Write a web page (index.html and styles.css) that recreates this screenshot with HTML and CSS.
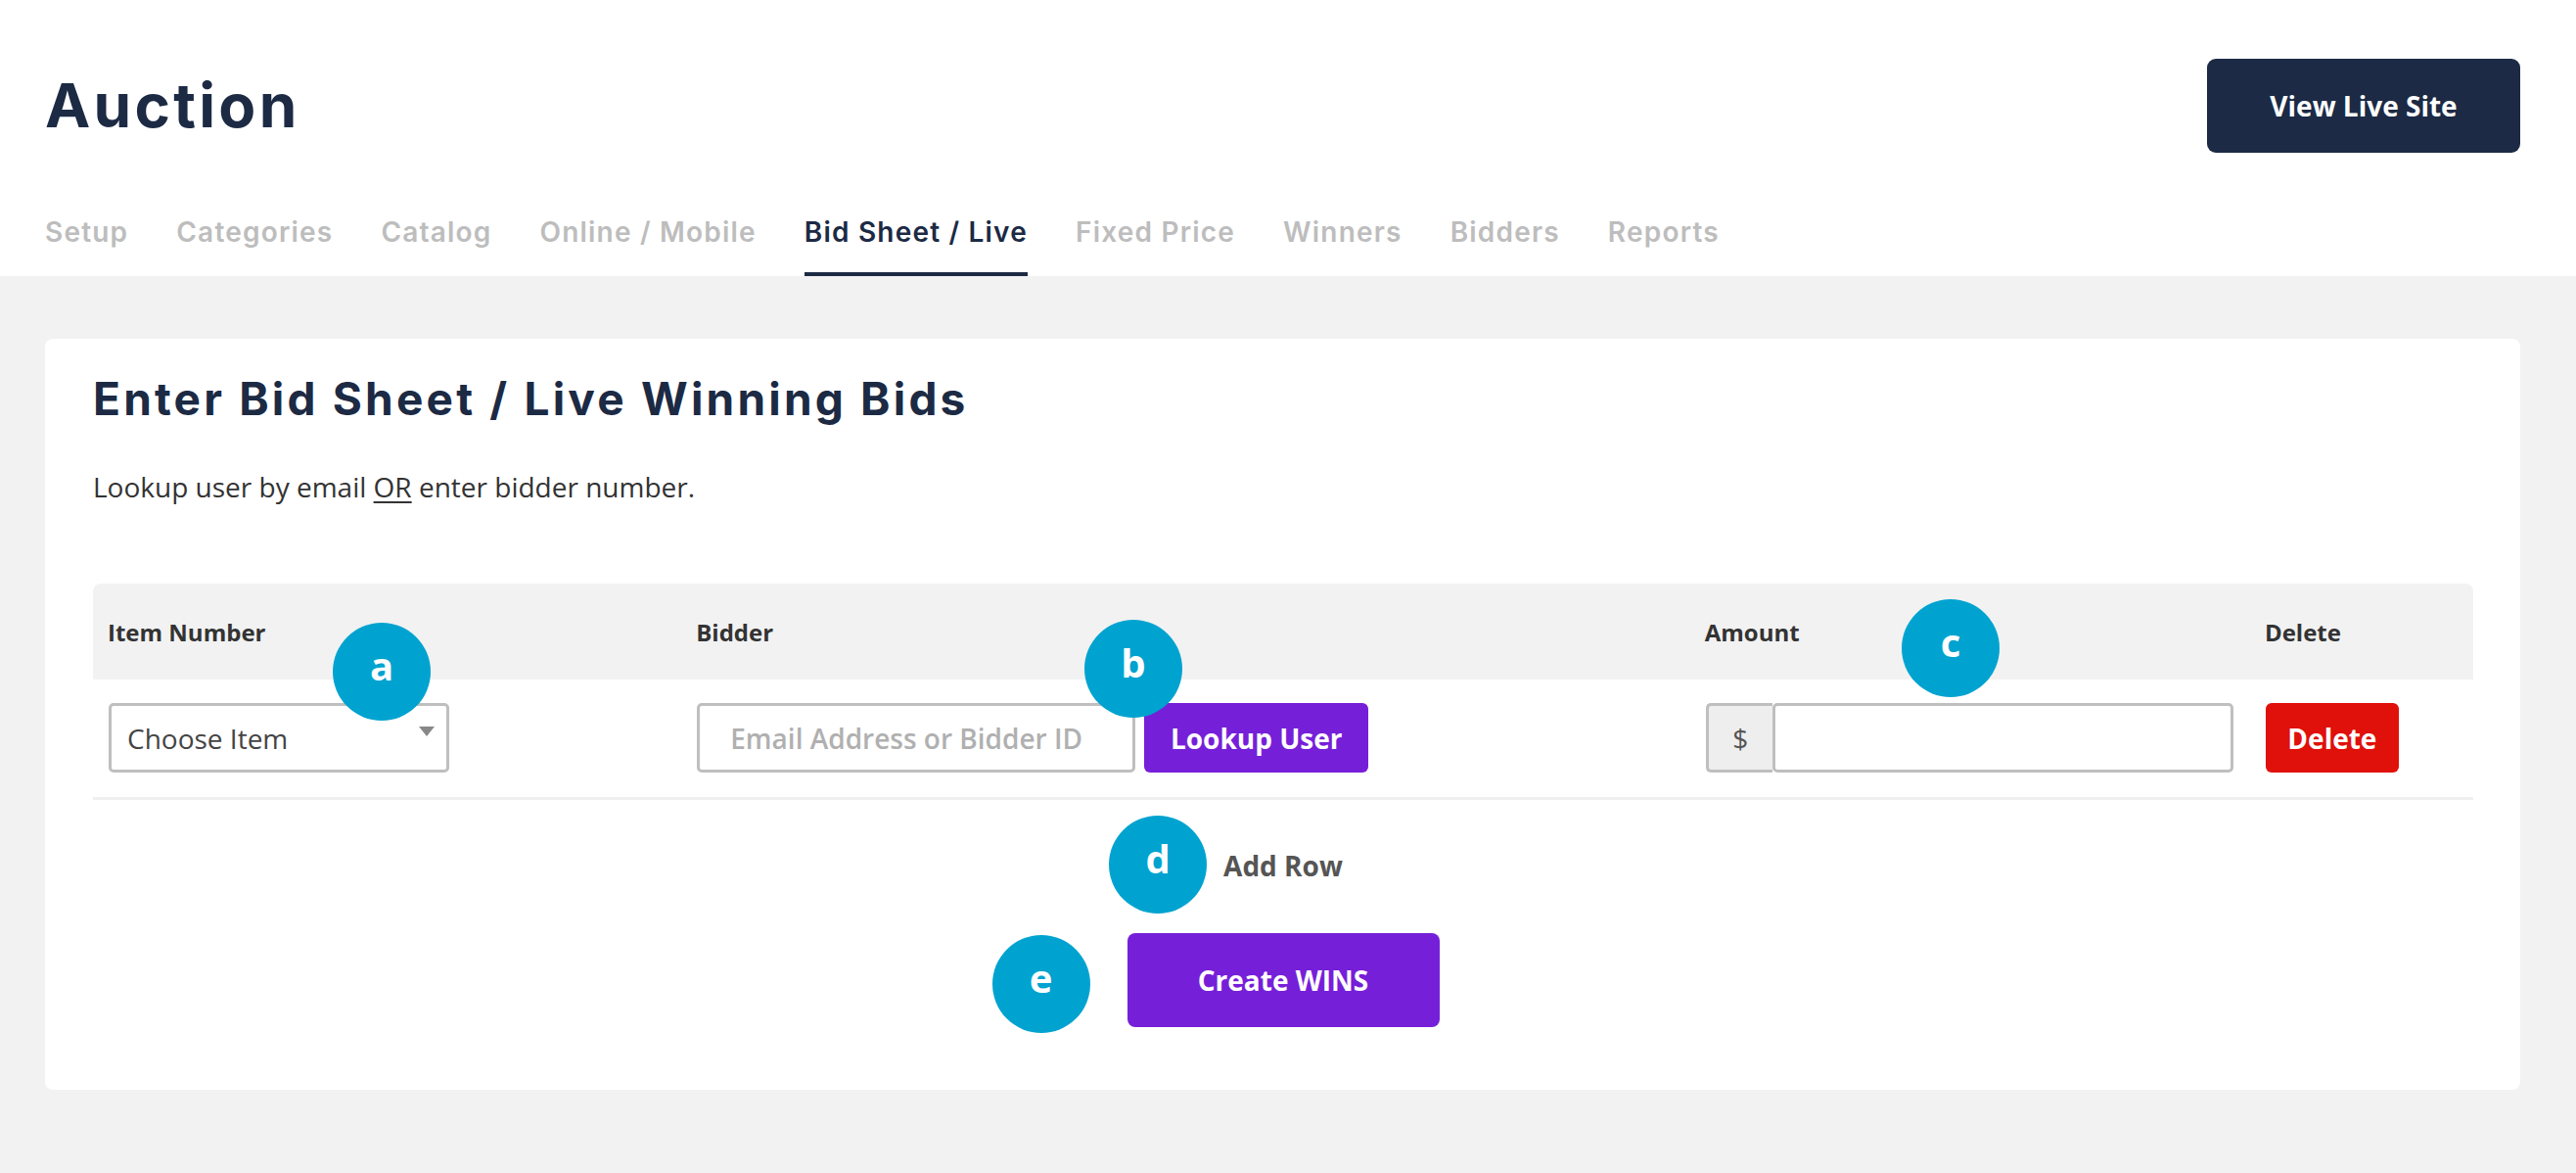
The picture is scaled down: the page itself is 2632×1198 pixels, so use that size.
FILE: index.html
```html
<!DOCTYPE html>
<html lang="en">
<head>
<meta charset="utf-8">
<title>Auction - Bid Sheet / Live</title>
<link rel="stylesheet" href="styles.css">
</head>
<body>
<header class="page-header">
  <div class="header-top">
    <h1 class="page-title">Auction</h1>
    <a class="btn btn-dark" href="#">View Live Site</a>
  </div>
  <nav class="tabs">
    <a class="tab" href="#">Setup</a>
    <a class="tab" href="#">Categories</a>
    <a class="tab" href="#">Catalog</a>
    <a class="tab" href="#">Online / Mobile</a>
    <a class="tab active" href="#">Bid Sheet / Live</a>
    <a class="tab" href="#">Fixed Price</a>
    <a class="tab" href="#">Winners</a>
    <a class="tab" href="#">Bidders</a>
    <a class="tab" href="#">Reports</a>
  </nav>
</header>

<main class="main">
  <section class="card">
    <h2 class="card-title">Enter Bid Sheet / Live Winning Bids</h2>
    <p class="intro">Lookup user by email <u>OR</u> enter bidder number.</p>

    <div class="bids">
      <div class="bids-head">
        <div class="cell">Item Number</div>
        <div class="cell">Bidder</div>
        <div class="cell">Amount</div>
        <div class="cell">Delete</div>
      </div>
      <div class="bids-row">
        <div class="cell">
          <div class="select">
            <span>Choose Item</span>
            <span class="caret"></span>
          </div>
        </div>
        <div class="cell bidder">
          <input class="input email" type="text" placeholder="Email Address or Bidder ID">
          <button class="btn btn-purple btn-lookup">Lookup User</button>
        </div>
        <div class="cell">
          <div class="amount">
            <span class="addon">$</span>
            <input class="input money" type="text">
          </div>
        </div>
        <div class="cell">
          <button class="btn btn-red btn-delete">Delete</button>
        </div>
      </div>
      <span class="badge badge-a">a</span>
      <span class="badge badge-b">b</span>
      <span class="badge badge-c">c</span>
    </div>

    <div class="actions">
      <a class="add-row" href="#"><span class="badge badge-d">d</span>Add Row</a>
      <button class="btn btn-purple btn-create"><span class="badge badge-e">e</span>Create WINS</button>
    </div>
  </section>
</main>
</body>
</html>
```

FILE: styles.css
```css
* { box-sizing: border-box; }

html, body {
  margin: 0;
  padding: 0;
}

body {
  background: #f2f2f2;
  font-family: "Open Sans", "Liberation Sans", sans-serif;
  color: #333;
  min-height: 1198px;
}

a { text-decoration: none; }

/* ---------- Header ---------- */
.page-header {
  background: #fff;
  padding: 60px 57px 0 46px;
}

.header-top {
  display: flex;
  align-items: center;
  justify-content: space-between;
  height: 96px;
}

.page-title {
  margin: 0;
  font-family: "Inter", "Liberation Sans", sans-serif;
  font-weight: 700;
  font-size: 62px;
  line-height: 1;
  color: #1c2a44;
  letter-spacing: 3.3px;
}

.btn {
  display: inline-flex;
  align-items: center;
  justify-content: center;
  border: 0;
  font-family: "Open Sans", "Liberation Sans", sans-serif;
  font-weight: 700;
  color: #fff;
  cursor: pointer;
}

.btn-dark {
  width: 320px;
  height: 96px;
  border-radius: 9px;
  background: #1c2a45;
  font-size: 28px;
}

.tabs {
  display: flex;
  gap: 49px;
  margin-top: 64px;
}

.tab {
  font-family: "Inter", "Liberation Sans", sans-serif;
  font-weight: 600;
  font-size: 28px;
  line-height: 34px;
  color: #bdbdbd;
  padding-bottom: 24px;
  border-bottom: 4px solid transparent;
  letter-spacing: 1.2px;
}

.tab.active {
  color: #1c2a44;
  border-bottom-color: #1c2a44;
}

/* ---------- Main ---------- */
.main {
  padding: 64px 57px 86px 46px;
}

.card {
  background: #fff;
  border-radius: 8px;
  padding: 33px 48px 64px 49px;
}

.card-title {
  margin: 0;
  font-family: "Inter", "Liberation Sans", sans-serif;
  font-weight: 700;
  font-size: 46px;
  line-height: 56px;
  color: #1c2a44;
  letter-spacing: 3.2px;
}

.intro {
  margin: 43px 0 0;
  font-size: 28px;
  line-height: 38px;
  color: #333;
}

.intro u {
  text-decoration-thickness: 2px;
  text-underline-offset: 4px;
}

/* ---------- Bids table ---------- */
.bids {
  position: relative;
  margin-top: 80px;
}

.bids-head,
.bids-row {
  display: grid;
  grid-template-columns: 601fr 1030fr 572fr 228fr;
}

.bids-head {
  height: 98px;
  align-items: center;
  background: #f2f2f2;
  border-radius: 8px 8px 0 0;
  font-weight: 700;
  font-size: 24px;
  color: #333;
}

.cell {
  padding: 0 16px;
}

.bids-head .cell {
  padding-left: 15px;
}

.bids-row {
  padding: 24px 0 25px;
  border-bottom: 3px solid #f0f0f0;
  align-items: center;
}

.select {
  position: relative;
  display: flex;
  align-items: center;
  justify-content: space-between;
  width: 348px;
  height: 71px;
  border: 3px solid #bfbfbf;
  border-radius: 5px;
  padding: 0 12px 0 16px;
  font-size: 28px;
  color: #444;
  background: #fff;
}

.caret {
  width: 0;
  height: 0;
  border-left: 8px solid transparent;
  border-right: 8px solid transparent;
  border-top: 10px solid #888;
  margin-top: -14px;
}

.bidder {
  display: flex;
  gap: 9px;
}

.input {
  height: 71px;
  border: 3px solid #bfbfbf;
  border-radius: 5px;
  background: #fff;
  font-family: "Open Sans", "Liberation Sans", sans-serif;
  font-size: 28px;
  color: #333;
  outline: none;
}

.input::placeholder {
  color: #b0b0b0;
  font-weight: 600;
}

.email {
  width: 448px;
  padding: 0 12px 0 31px;
}

.btn-purple {
  background: #761fd9;
}

.btn-lookup {
  width: 229px;
  height: 71px;
  border-radius: 6px;
  font-size: 28px;
}

.amount {
  display: flex;
}

.addon {
  display: flex;
  align-items: center;
  justify-content: center;
  width: 68px;
  height: 71px;
  background: #eeeeee;
  border: 3px solid #bfbfbf;
  border-right: 0;
  border-radius: 5px 0 0 5px;
  font-size: 28px;
  color: #555;
}

.money {
  width: 471px;
  padding: 0 16px;
}

.btn-red {
  background: #e0100a;
}

.btn-delete {
  width: 136px;
  height: 71px;
  border-radius: 6px;
  font-size: 28px;
}

/* ---------- Actions ---------- */
.actions {
  display: flex;
  flex-direction: column;
  align-items: center;
}

.add-row {
  position: relative;
  margin-top: 48px;
  font-weight: 700;
  font-size: 28px;
  line-height: 38px;
  color: #555;
}

.btn-create {
  position: relative;
  margin-top: 50px;
  width: 319px;
  height: 96px;
  border-radius: 8px;
  font-size: 28px;
}

/* ---------- Annotation badges ---------- */
.badge {
  position: absolute;
  width: 100px;
  height: 100px;
  border-radius: 50%;
  background: #00a3d0;
  color: #fff;
  font-family: "Open Sans", "Liberation Sans", sans-serif;
  font-weight: 700;
  font-size: 40px;
  line-height: 1.36;
  display: flex;
  align-items: center;
  justify-content: center;
  padding-bottom: 12px;
  z-index: 2;
}

.badge-a { left: 245px; top: 40px; }
.badge-b { left: 1013px; top: 37px; }
.badge-c { left: 1848px; top: 16px; }

.badge-d {
  right: calc(100% + 17px);
  top: -32px;
}

.badge-e {
  right: calc(100% + 38px);
  top: 2px;
}
```
